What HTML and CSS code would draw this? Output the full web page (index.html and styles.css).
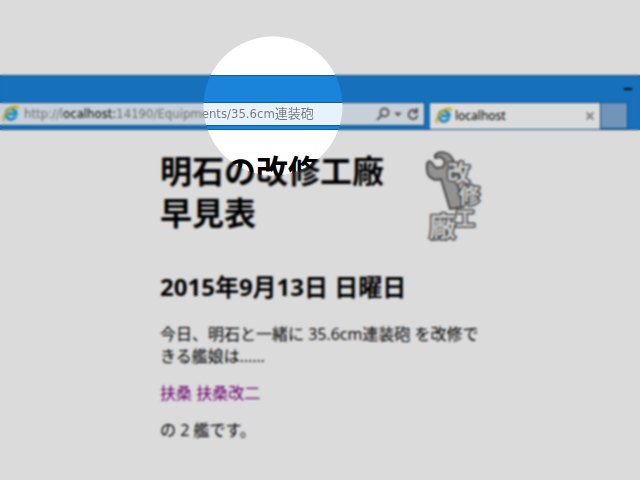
FILE: index.html
```
<!DOCTYPE html>
<html lang="ja">
<head>
<meta charset="utf-8">
<title>明石の改修工廠早見表</title>
<link rel="stylesheet" href="styles.css">
</head>
<body>
<svg class="defs" aria-hidden="true">
  <symbol id="ie" viewBox="0 0 18 18">
    <path d="M13.8 11.2A5.2 5.2 0 1 1 14.2 8.800H6" fill="none" stroke="#2ba5e0" stroke-width="3.200"/>
    <path d="M2.500 16C-.5 14 4 5 11 2c3-1.300 5.500-.8 4.500 2" fill="none" stroke="#f2c21c" stroke-width="2"/>
  </symbol>
</svg>
<header class="browser">
  <div class="titlebar"><button class="minimize" aria-label="最小化"></button></div>
  <div class="toolbar">
    <div class="address">
      <svg class="ie"><use href="#ie"/></svg>
      <input class="url" type="text" aria-label="アドレス" value="http://localhost:14190/Equipments/35.6cm連装砲">
      <button class="tool" aria-label="検索"><svg width="14" height="14" viewBox="0 0 14 14"><circle cx="8.500" cy="5.500" r="4"/><path d="M5.500 8.500 1 13"/></svg></button>
      <button class="tool" aria-label="履歴"><svg width="8" height="14" viewBox="0 0 8 14"><path class="solid" d="M0 5.500h8L4 9.500z"/></svg></button>
      <button class="tool" aria-label="更新"><svg width="14" height="14" viewBox="0 0 14 14"><path d="M10 4A4.500 4.500 0 1 0 11.500 8.500M11 1v4.500H7"/></svg></button>
    </div>
    <div class="tab">
      <svg class="ie"><use href="#ie"/></svg>
      <span class="tab-title">localhost</span>
      <button class="tool close" aria-label="タブを閉じる"><svg width="10" height="10" viewBox="0 0 10 10"><path d="m1.500 1.500 7 7m0-7-7 7"/></svg></button>
    </div>
    <button class="new-tab" aria-label="新しいタブ"></button>
  </div>
</header>
<main class="page">
  <div class="masthead">
    <h1>明石の改修工廠早見表</h1>
    <svg class="logo" viewBox="0 0 58 94" role="img" aria-label="改修工廠">
      <path class="wrench" d="M11 5C15 1 24 1 28 8c3 4 2 7 2 9l9 40-13 2L17 29c-3 1-6 1-8 0-4-2-6-5-6-9 0-3-1-6 1-8 2-1 3-1 4 1l4 5 7-1 2-6-4-4-6 1z"/>
      <g class="logo-text">
        <text x="23" y="31" font-size="23">改</text>
        <text x="35" y="53" font-size="21">修</text>
        <text x="31" y="76" font-size="20">工</text>
        <text x="5" y="87" font-size="27">廠</text>
      </g>
    </svg>
  </div>
  <h2>2015年9月13日 日曜日</h2>
  <p>今日、明石と一緒に 35.6cm連装砲 を改修できる艦娘は……</p>
  <p><a href="#fuso">扶桑</a> <a href="#fuso-kai-ni">扶桑改二</a></p>
  <p>の 2 艦です。</p>
</main>
<div class="spotlight"></div>
</body>
</html>
```
FILE: styles.css
```
* { box-sizing: border-box; }
body {
  margin: 0;
  min-height: 100vh;
  padding-top: 75px;
  background: #fff;
  color: #000;
  font: 16px/22px "Open Sans", "Noto Sans CJK JP", sans-serif;
}
button { padding: 0; border: 0; background: none; }
.defs { position: absolute; width: 0; height: 0; }
.browser {
  background: #1a83da;
  border-top: 1px solid #105c9e;
  border-bottom: 1px solid #105c9e;
}
.titlebar {
  display: flex;
  justify-content: flex-end;
  align-items: center;
  height: 26px;
  padding: 0 8px;
}
.minimize { width: 8px; height: 2px; background: #111; }
.toolbar {
  display: grid;
  grid-template-columns: 43fr 17fr 28px;
  align-items: start;
  height: 27px;
  padding-right: 12px;
}
.address {
  display: flex;
  align-items: center;
  height: 24px;
  margin-right: 5px;
  padding: 0 4px 0 2px;
  gap: 4px;
  background: #e8f2fc;
  border: 1px solid #105c9e;
  border-left: 0;
}
.ie { flex: none; width: 18px; height: 18px; }
.url {
  flex: 1;
  min-width: 0;
  padding: 0;
  border: 0;
  color: transparent;
  background: linear-gradient(90deg, #777 40px, #000 40px, #000 94px, #777 94px);
  background-clip: text;
  font: 13px/18px "DejaVu Sans Condensed", "Noto Sans CJK JP", sans-serif;
}
.tool { display: flex; }
.tool svg { fill: none; stroke: #666; stroke-width: 2; }
.tool .solid { fill: #666; stroke: none; }
.tab {
  display: flex;
  align-items: center;
  height: 27px;
  padding: 0 5px;
  gap: 2px;
  background: #fff;
  border-top: 1px solid #105c9e;
}
.tab-title { flex: 1; font: 12px/18px "Noto Sans", sans-serif; }
.tool.close svg { stroke: #999; }
.new-tab { width: 28px; height: 27px; background: #83aed8; border: 1px solid #105c9e; }
.page { max-width: 320px; margin: 0 auto; padding-top: 20px; }
.masthead { display: flex; align-items: flex-start; gap: 24px; }
h1 { flex: 1; margin: 0; font-size: 32px; line-height: 42px; }
.logo { flex: none; width: 58px; height: 94px; margin-right: -2px; }
.wrench { fill: #aaa; stroke: #555; stroke-width: 2; stroke-linejoin: round; }
.logo-text {
  fill: #eee;
  stroke: #555;
  stroke-width: 3;
  stroke-linejoin: round;
  paint-order: stroke;
  font-weight: 700;
}
h2 { margin: 26px 0 19px; font-size: 24px; line-height: 34px; }
p { margin: 0 0 15px; }
a { color: #800080; text-decoration: none; }
.spotlight {
  position: fixed;
  inset: 0;
  pointer-events: none;
  background: rgb(0 0 0 / 14%);
  backdrop-filter: blur(1px);
  mask-image: radial-gradient(circle at 273px 106px, transparent 69px, #000 70px);
}
```
